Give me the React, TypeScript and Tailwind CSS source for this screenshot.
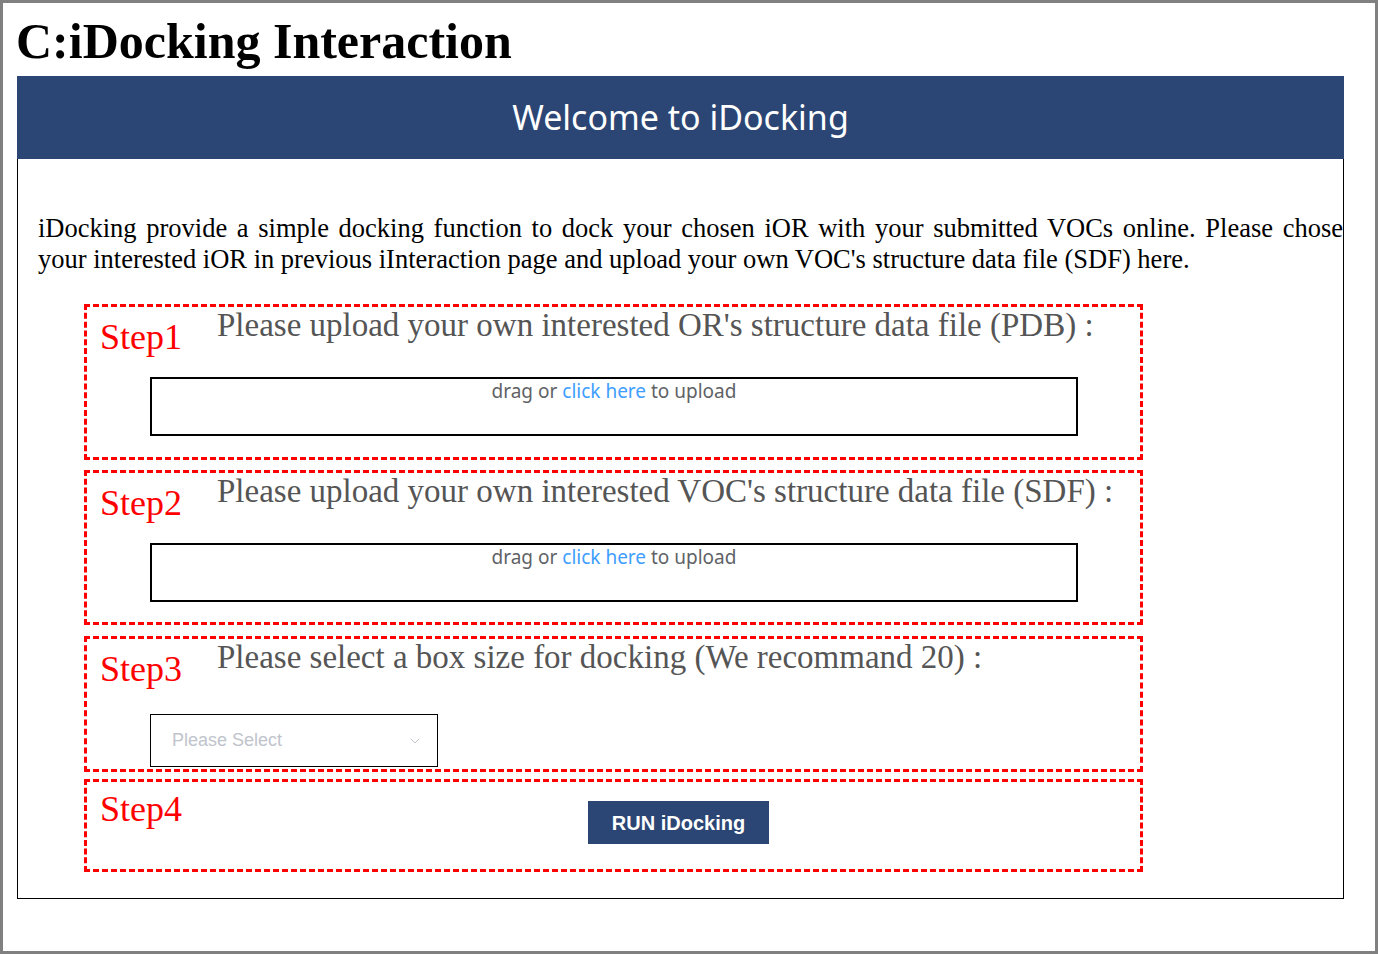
import { ChevronDown } from "lucide-react";

const serif = "font-['Liberation_Serif','Times_New_Roman',serif]";
const sans = "font-['Noto_Sans','Open_Sans',sans-serif]";
const arial = "font-['Liberation_Sans',Arial,sans-serif]";

function UploadBox() {
  return (
    <div className={`ml-[63px] mt-[20px] h-[59px] w-[928px] border-2 border-black text-center text-[19px] leading-[25px] text-[#606266] ${sans}`}>
      drag or <span className="text-[#409eff]">click here</span> to upload
    </div>
  );
}

function StepTitle({ step, text }: { step: string; text: string }) {
  return (
    <div className="flex items-start">
      <div className={`w-[130px] shrink-0 pl-[13px] pt-[10px] text-[36px] leading-[40px] text-[#ff0000] ${serif}`}>{step}</div>
      <div className={`whitespace-nowrap text-[33px] leading-[36px] text-[#555555] ${serif}`}>{text}</div>
    </div>
  );
}

export default function App() {
  return (
    <div className="h-[954px] w-[1378px] overflow-hidden border-[3px] border-[#808080] bg-white">
      <h1 className={`ml-[13px] mt-[8px] text-[50px] font-bold leading-[60px] text-black ${serif}`}>
        C:iDocking Interaction
      </h1>

      <div className="ml-[14px] mt-[5px] h-[823px] w-[1327px] border-x border-b border-black">
        {/* header */}
        <div className={`-mx-px flex h-[83px] items-center justify-center bg-[#2b4574] text-[34px] text-white ${sans}`}>
          Welcome to iDocking
        </div>

        <div className={`mt-[54px] w-[1325px] pl-[20px] text-[26.5px] leading-[31px] text-black ${serif}`}>
          <div className="text-justify [text-align-last:justify]">
            iDocking provide a simple docking function to dock your chosen iOR with your submitted VOCs online. Please chose
          </div>
          <div>your interested iOR in previous iInteraction page and upload your own VOC's structure data file (SDF) here.</div>
        </div>

        <div className="ml-[66px] mt-[29px] flex w-[1059px] flex-col">
          {/* step 1 */}
          <div className="h-[156px] border-[3px] border-dashed border-[#ff0000]">
            <StepTitle step="Step1" text="Please upload your own interested OR's structure data file (PDB) :" />
            <UploadBox />
          </div>

          {/* step 2 */}
          <div className="mt-[10px] h-[155px] border-[3px] border-dashed border-[#ff0000]">
            <StepTitle step="Step2" text="Please upload your own interested VOC's structure data file (SDF) :" />
            <UploadBox />
          </div>

          {/* step 3 */}
          <div className="mt-[11px] h-[136px] border-[3px] border-dashed border-[#ff0000]">
            <StepTitle step="Step3" text="Please select a box size for docking (We recommand 20) :" />
            <div className={`ml-[63px] mt-[25px] flex h-[53px] w-[288px] items-center justify-between border border-black pl-[21px] pr-[14px] text-[18px] text-[#c0c4cc] ${arial}`}>
              <span>Please Select</span>
              <ChevronDown size={16} strokeWidth={1.5} className="text-[#c0c4cc]" />
            </div>
          </div>

          {/* step 4 */}
          <div className="mt-[7px] flex h-[93px] border-[3px] border-dashed border-[#ff0000]">
            <div className={`w-[117px] shrink-0 pl-[13px] pt-[7px] text-[36px] leading-[40px] text-[#ff0000] ${serif}`}>Step4</div>
            <div className="ml-[384px] pt-[19px]">
              <button className={`h-[43px] w-[181px] bg-[#2b4574] text-[20px] font-bold text-white ${arial}`}>
                RUN iDocking
              </button>
            </div>
          </div>
        </div>
      </div>
    </div>
  );
}
